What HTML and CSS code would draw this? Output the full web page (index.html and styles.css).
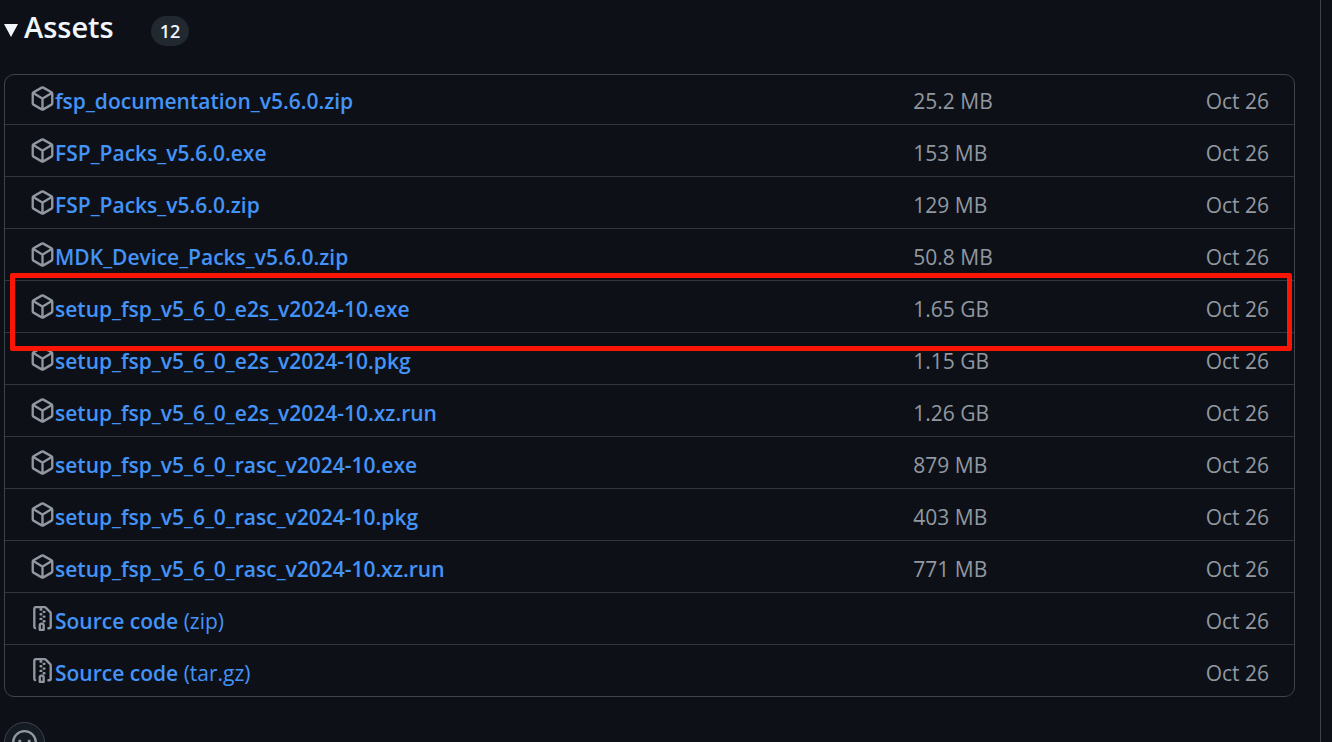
FILE: index.html
```html
<!DOCTYPE html>
<html lang="en">
<head>
  <meta charset="UTF-8" />
  <meta name="viewport" content="width=device-width, initial-scale=1.0" />
  <title>Assets</title>
  <link rel="stylesheet" href="styles.css">
</head>
<body>

<svg class="sprite" aria-hidden="true">
  <symbol id="package" viewBox="0 0 16 16">
    <path d="m8.878.392 5.25 3.045c.54.314.872.89.872 1.514v6.098a1.75 1.75 0 0 1-.872 1.514l-5.25 3.045a1.75 1.75 0 0 1-1.756 0l-5.25-3.045A1.75 1.75 0 0 1 1 11.049V4.951c0-.624.332-1.201.872-1.514L7.122.392a1.75 1.75 0 0 1 1.756 0ZM7.875 1.69l-4.63 2.685L8 7.133l4.755-2.758-4.63-2.685a.248.248 0 0 0-.25 0ZM2.5 5.677v5.372c0 .09.047.171.125.216l4.625 2.683V8.432Zm6.25 8.271 4.625-2.683a.25.25 0 0 0 .125-.216V5.677L8.75 8.432Z"/>
  </symbol>
  <symbol id="file-zip" viewBox="0 0 16 16">
    <path d="M3.5 1.75v11.5c0 .09.048.173.126.217a.75.75 0 0 1-.752 1.298A1.748 1.748 0 0 1 2 13.25V1.75C2 .784 2.784 0 3.75 0h5.586c.464 0 .909.185 1.237.513l2.914 2.914c.329.328.513.773.513 1.237v8.586A1.75 1.75 0 0 1 12.25 15h-.5a.75.75 0 0 1 0-1.5h.5a.25.25 0 0 0 .25-.25V4.664a.25.25 0 0 0-.073-.177L9.513 1.573a.25.25 0 0 0-.177-.073H7.25a.75.75 0 0 1 0 1.5h-.5a.75.75 0 0 1 0-1.5h-3a.25.25 0 0 0-.25.25Zm3.75 8.75h.5c.966 0 1.75.784 1.75 1.75v3a.75.75 0 0 1-.75.75h-2.5a.75.75 0 0 1-.75-.75v-3c0-.966.784-1.75 1.75-1.75ZM6 5.25a.75.75 0 0 1 .75-.75h.5a.75.75 0 0 1 0 1.5h-.5A.75.75 0 0 1 6 5.25Zm.75 2.25h.5a.75.75 0 0 1 0 1.5h-.5a.75.75 0 0 1 0-1.5ZM8 6.75A.75.75 0 0 1 8.75 6h.5a.75.75 0 0 1 0 1.5h-.5A.75.75 0 0 1 8 6.75ZM8.75 3h.5a.75.75 0 0 1 0 1.5h-.5a.75.75 0 0 1 0-1.5ZM8 9.75A.75.75 0 0 1 8.75 9h.5a.75.75 0 0 1 0 1.5h-.5A.75.75 0 0 1 8 9.75Zm-1 2.5v2.25h1v-2.25a.25.25 0 0 0-.25-.25h-.5a.25.25 0 0 0-.25.25Z"/>
  </symbol>
  <symbol id="smiley" viewBox="0 0 16 16">
    <path d="M8 0a8 8 0 1 1 0 16A8 8 0 0 1 8 0ZM1.5 8a6.5 6.5 0 1 0 13 0 6.5 6.5 0 0 0-13 0Zm3.82 1.636a.75.75 0 0 1 1.038.175l.007.009c.103.118.22.222.35.31.264.178.683.37 1.285.37.602 0 1.02-.192 1.285-.371.13-.088.247-.192.35-.31l.007-.008a.75.75 0 0 1 1.222.87c-.4.6-1.4 1.3-2.864 1.3-1.464 0-2.464-.7-2.864-1.3a.75.75 0 0 1 .183-1.044ZM12 7a1 1 0 1 1-2 0 1 1 0 0 1 2 0ZM5 8a1 1 0 1 1 0-2 1 1 0 0 1 0 2Z"/>
  </symbol>
</svg>

<main class="release">
  <details open>
    <summary>
      <h3>Assets</h3>
      <span class="counter">12</span>
    </summary>

    <table class="assets">
      <colgroup>
        <col class="col-name">
        <col class="col-size">
        <col class="col-date">
      </colgroup>
      <tbody>
        <tr>
          <td><a href="#"><svg class="icon"><use href="#package"/></svg><b>fsp_documentation_v5.6.0.zip</b></a></td>
          <td>25.2 MB</td>
          <td>Oct 26</td>
        </tr>
        <tr>
          <td><a href="#"><svg class="icon"><use href="#package"/></svg><b>FSP_Packs_v5.6.0.exe</b></a></td>
          <td>153 MB</td>
          <td>Oct 26</td>
        </tr>
        <tr>
          <td><a href="#"><svg class="icon"><use href="#package"/></svg><b>FSP_Packs_v5.6.0.zip</b></a></td>
          <td>129 MB</td>
          <td>Oct 26</td>
        </tr>
        <tr>
          <td><a href="#"><svg class="icon"><use href="#package"/></svg><b>MDK_Device_Packs_v5.6.0.zip</b></a></td>
          <td>50.8 MB</td>
          <td>Oct 26</td>
        </tr>
        <tr class="marked">
          <td><a href="#"><svg class="icon"><use href="#package"/></svg><b>setup_fsp_v5_6_0_e2s_v2024-10.exe</b></a></td>
          <td>1.65 GB</td>
          <td>Oct 26</td>
        </tr>
        <tr>
          <td><a href="#"><svg class="icon"><use href="#package"/></svg><b>setup_fsp_v5_6_0_e2s_v2024-10.pkg</b></a></td>
          <td>1.15 GB</td>
          <td>Oct 26</td>
        </tr>
        <tr>
          <td><a href="#"><svg class="icon"><use href="#package"/></svg><b>setup_fsp_v5_6_0_e2s_v2024-10.xz.run</b></a></td>
          <td>1.26 GB</td>
          <td>Oct 26</td>
        </tr>
        <tr>
          <td><a href="#"><svg class="icon"><use href="#package"/></svg><b>setup_fsp_v5_6_0_rasc_v2024-10.exe</b></a></td>
          <td>879 MB</td>
          <td>Oct 26</td>
        </tr>
        <tr>
          <td><a href="#"><svg class="icon"><use href="#package"/></svg><b>setup_fsp_v5_6_0_rasc_v2024-10.pkg</b></a></td>
          <td>403 MB</td>
          <td>Oct 26</td>
        </tr>
        <tr>
          <td><a href="#"><svg class="icon"><use href="#package"/></svg><b>setup_fsp_v5_6_0_rasc_v2024-10.xz.run</b></a></td>
          <td>771 MB</td>
          <td>Oct 26</td>
        </tr>
        <tr>
          <td><a href="#"><svg class="icon"><use href="#file-zip"/></svg><b>Source code</b>&nbsp;(zip)</a></td>
          <td></td>
          <td>Oct 26</td>
        </tr>
        <tr>
          <td><a href="#"><svg class="icon"><use href="#file-zip"/></svg><b>Source code</b>&nbsp;(tar.gz)</a></td>
          <td></td>
          <td>Oct 26</td>
        </tr>
      </tbody>
    </table>
  </details>

  <button class="react" type="button" aria-label="Add reaction">
    <svg class="icon"><use href="#smiley"/></svg>
  </button>
</main>

</body>
</html>
```

FILE: styles.css
```css
* {
  box-sizing: border-box;
}

body {
  margin: 0;
  height: 100vh;
  overflow: hidden;
  background: #0d1117;
  color: #f0f6fc;
  font-family: "Segoe UI", "Open Sans", "Noto Sans", sans-serif;
  font-size: 21px;
}

.sprite {
  display: none;
}

.release {
  min-height: 100vh;
  margin-right: 11px;
  padding: 8px 25px 0 4px;
  border-right: 1px solid #3d444d;
}

summary {
  display: flex;
  align-items: center;
  height: 40px;
  margin-bottom: 26px;
  cursor: pointer;
  list-style: none;
}

/* disclosure arrow */
summary::before {
  content: "";
  margin: 5px 6px 0 0;
  border: 7px solid transparent;
  border-top: 13px solid #f0f6fc;
  border-bottom: 0;
}

h3 {
  margin: 0 0 2px;
  font-size: 29px;
  font-weight: 600;
  line-height: 38px;
}

.counter {
  margin: 6px 0 0 37px;
  padding: 0 9px;
  border-radius: 15px;
  background: #212830;
  font-size: 18px;
  font-weight: 600;
  line-height: 30px;
}

.assets {
  width: 100%;
  table-layout: fixed;
  border: 1px solid #3d444d;
  border-radius: 10px;
  border-spacing: 0;
}

.col-name {
  width: 70%;
}

.col-size {
  width: 15%;
}

.assets td {
  padding: 13px 0 8px;
  border-top: 1px solid #31373f;
  color: #9198a1;
  line-height: 30px;
  white-space: nowrap;
}

.assets tr:first-child td {
  padding-top: 11px;
  border-top: 0;
}

.assets td:first-child {
  padding-left: 25px;
}

.assets td:nth-child(2) {
  padding-left: 6px;
}

.assets td:last-child {
  padding-right: 25px;
  text-align: right;
}

.assets a {
  display: flex;
  align-items: flex-start;
  color: #4493f8;
  text-decoration: none;
}

.assets a:hover {
  text-decoration: underline;
}

.assets b {
  font-weight: 600;
}

.icon {
  width: 25px;
  height: 25px;
  fill: #9198a1;
}

/* red frame around the installer to download */
.marked {
  position: relative;
}

.marked td:first-child::after {
  content: "";
  position: absolute;
  inset: -7px 2px -19px 5px;
  border: 5px solid #fb1505;
  border-radius: 2px;
  pointer-events: none;
}

.react {
  display: flex;
  align-items: center;
  justify-content: center;
  width: 41px;
  height: 41px;
  margin-top: 25px;
  padding: 0;
  border: 1px solid #3d444d;
  border-radius: 50%;
  background: #151b23;
}
```
